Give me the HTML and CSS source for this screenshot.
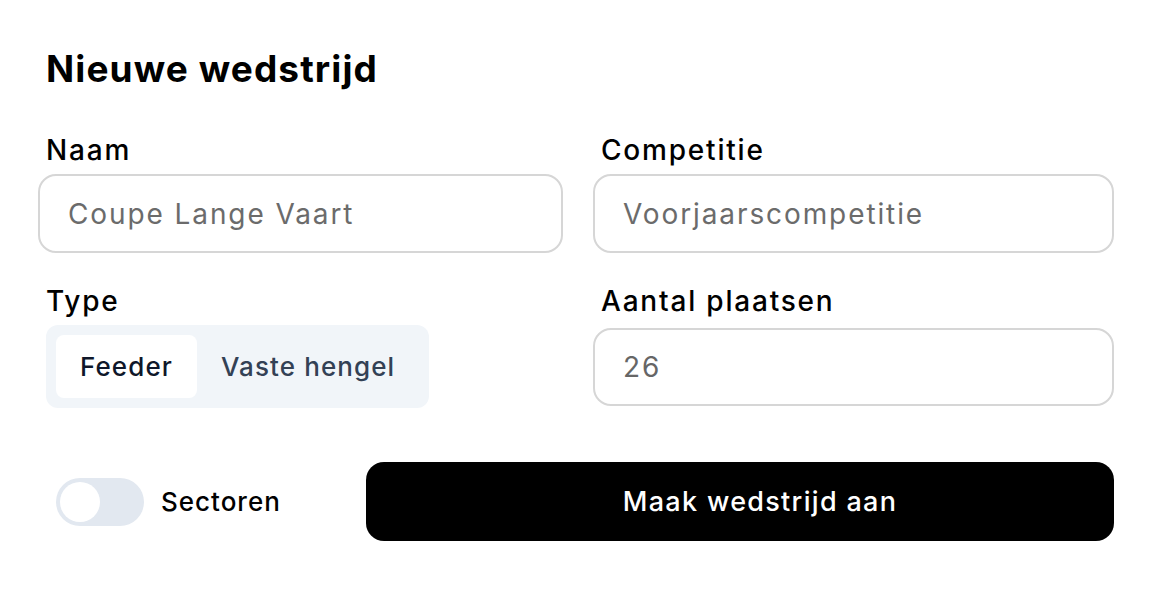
FILE: index.html
```html
<!DOCTYPE html>
<html>
<head>
  <title>Nieuwe wedstrijd</title>
  <link rel="stylesheet" href="styles.css">
</head>
<body>
  <div class="form">
    <h1>Nieuwe wedstrijd</h1>

    <div class="grid">
      <div class="field">
        <label>Naam</label>
        <input type="text" placeholder="Coupe Lange Vaart">
      </div>
      <div class="field">
        <label>Competitie</label>
        <input type="text" placeholder="Voorjaarscompetitie">
      </div>
      <div class="field">
        <label>Type</label>
        <div class="segmented">
          <button class="active">Feeder</button>
          <button>Vaste hengel</button>
        </div>
      </div>
      <div class="field">
        <label>Aantal plaatsen</label>
        <input type="text" class="shifted" value="26">
      </div>
    </div>

    <div class="actions">
      <div class="switch-wrap">
        <span class="switch"><span class="thumb"></span></span>
        <span class="switch-label">Sectoren</span>
      </div>
      <button class="submit">Maak wedstrijd aan</button>
    </div>
  </div>
</body>
</html>
```

FILE: styles.css
```css
body {
  margin: 0;
  background-color: #fff;
  font-family: Inter, "Liberation Sans", sans-serif;
  color: #000;
}

.form {
  padding: 47px 42px 0 38px;
}

h1 {
  margin: 0 0 42px;
  padding-left: 8px;
  font-size: 37px;
  line-height: 44px;
  font-weight: 700;
  letter-spacing: 1.1px;
}

.grid {
  display: grid;
  grid-template-columns: 525px 1fr;
  column-gap: 30px;
  row-gap: 31px;
}

.field {
  display: flex;
  flex-direction: column;
  gap: 7px;
}

.field label {
  padding-left: 8px;
  font-size: 28px;
  line-height: 34px;
  font-weight: 500;
  letter-spacing: 1.8px;
}

.field input {
  height: 79px;
  box-sizing: border-box;
  padding: 0 28px;
  border: 2px solid #d6d6d6;
  border-radius: 18px;
  font-family: inherit;
  font-size: 28px;
  letter-spacing: 1.9px;
  color: #666;
  outline: none;
}

.field input::placeholder {
  color: #6b6b6b;
}

.field input.shifted {
  margin-top: 3px;
  height: 78px;
}

.segmented {
  display: flex;
  align-self: flex-start;
  margin-left: 8px;
  padding: 10px;
  background-color: #f1f5f9;
  border-radius: 12px;
}

.segmented button {
  height: 63px;
  padding: 0 24px;
  border: none;
  border-radius: 8px;
  background: transparent;
  font-family: inherit;
  font-size: 26px;
  font-weight: 500;
  letter-spacing: 1.1px;
  color: #334155;
}

.segmented button.active {
  background-color: #fff;
  color: #0f172a;
}

.actions {
  display: flex;
  align-items: center;
  margin-top: 54px;
}

.switch-wrap {
  display: flex;
  align-items: center;
  gap: 17px;
  width: 310px;
  padding-left: 18px;
}

.switch {
  display: flex;
  align-items: center;
  width: 88px;
  height: 48px;
  box-sizing: border-box;
  padding: 4px;
  background-color: #e2e8f0;
  border-radius: 24px;
}

.thumb {
  width: 40px;
  height: 40px;
  background-color: #fff;
  border-radius: 50%;
}

.switch-label {
  font-size: 26px;
  font-weight: 500;
  letter-spacing: 1px;
}

.submit {
  flex: 1;
  height: 79px;
  padding: 0 0 0 40px;
  border: none;
  border-radius: 18px;
  background-color: #000;
  color: #fff;
  font-family: inherit;
  font-size: 27px;
  font-weight: 500;
  letter-spacing: 1.3px;
}
```
